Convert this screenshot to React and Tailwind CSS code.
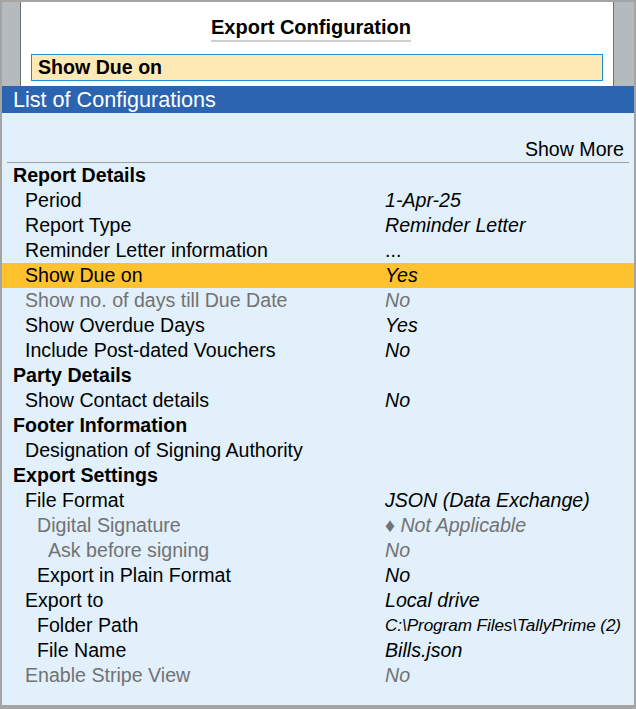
import React from "react";

const rows = [
  { t: "Report Details", lvl: 0, bold: true },
  { t: "Period", lvl: 1, v: "1-Apr-25" },
  { t: "Report Type", lvl: 1, v: "Reminder Letter" },
  { t: "Reminder Letter information", lvl: 1, v: "...", plainV: true },
  { t: "Show Due on", lvl: 1, v: "Yes", hl: true },
  { t: "Show no. of days till Due Date", lvl: 1, v: "No", dim: true },
  { t: "Show Overdue Days", lvl: 1, v: "Yes" },
  { t: "Include Post-dated Vouchers", lvl: 1, v: "No" },
  { t: "Party Details", lvl: 0, bold: true },
  { t: "Show Contact details", lvl: 1, v: "No" },
  { t: "Footer Information", lvl: 0, bold: true },
  { t: "Designation of Signing Authority", lvl: 1 },
  { t: "Export Settings", lvl: 0, bold: true },
  { t: "File Format", lvl: 1, v: "JSON (Data Exchange)" },
  { t: "Digital Signature", lvl: 2, v: "♦ Not Applicable", dim: true },
  { t: "Ask before signing", lvl: 3, v: "No", dim: true },
  { t: "Export in Plain Format", lvl: 2, v: "No" },
  { t: "Export to", lvl: 1, v: "Local drive" },
  { t: "Folder Path", lvl: 2, v: "C:\\Program Files\\TallyPrime (2)", small: true },
  { t: "File Name", lvl: 2, v: "Bills.json" },
  { t: "Enable Stripe View", lvl: 1, v: "No", dim: true },
];

const padByLevel = ["pl-[11px]", "pl-[23px]", "pl-[35px]", "pl-[46px]"];

export default function App() {
  return (
    <div
      className="w-[636px] h-[709px] flex flex-col border-t-2 border-l-2 border-r-2 border-b-4 border-[#a4a4a4] text-black"
      style={{ fontFamily: '"Liberation Sans", Arial, sans-serif' }}
    >
      <div className="h-[84px] bg-[#b5babe] pl-[18px] pr-[20px] flex">
        <div className="flex-1 bg-white border-l border-r border-[#707070] flex flex-col">
          <div className="h-[40px] flex items-end justify-center pr-[12px]">
            <div className="text-[20px] font-bold leading-[23px] border-b-2 border-[#cfcfcf] pb-[1px]">
              Export Configuration
            </div>
          </div>
          <div className="mt-[12px] mx-[10px] h-[27px] border border-[#1c8fd6] bg-[#fee9b4] flex items-center pl-[6px]">
            <span className="text-[19.6px] font-bold leading-none">Show Due on</span>
          </div>
        </div>
      </div>
      <div className="h-[27px] bg-[#2b64b0] flex items-center pl-[11px]">
        <span className="text-white text-[21.6px] leading-none">List of Configurations</span>
      </div>
      <div className="flex-1 bg-[#e1f0fb] flex flex-col text-[19.6px]">
        <div className="h-[25px]" />
        <div className="h-[25px] mx-[5px] border-b border-[#a0a0a0] flex items-center justify-end pr-[5px]">
          <span className="leading-none">Show More</span>
        </div>
        {rows.map((r, i) => (
          <div
            key={i}
            className={`h-[25px] flex items-center ${r.hl ? "bg-[#fec22e]" : ""}`}
          >
            <div
              className={`w-[383px] shrink-0 ${padByLevel[r.lvl]} ${r.bold ? "font-bold" : ""} ${
                r.dim ? "text-[#727272]" : ""
              } leading-none whitespace-nowrap`}
            >
              {r.t}
            </div>
            {r.v && (
              <div
                className={`${r.plainV ? "" : "italic"} ${r.dim ? "text-[#727272]" : ""} ${
                  r.small ? "text-[17.2px] tracking-[-0.1px]" : ""
                } leading-none whitespace-nowrap`}
              >
                {r.v}
              </div>
            )}
          </div>
        ))}
      </div>
    </div>
  );
}
